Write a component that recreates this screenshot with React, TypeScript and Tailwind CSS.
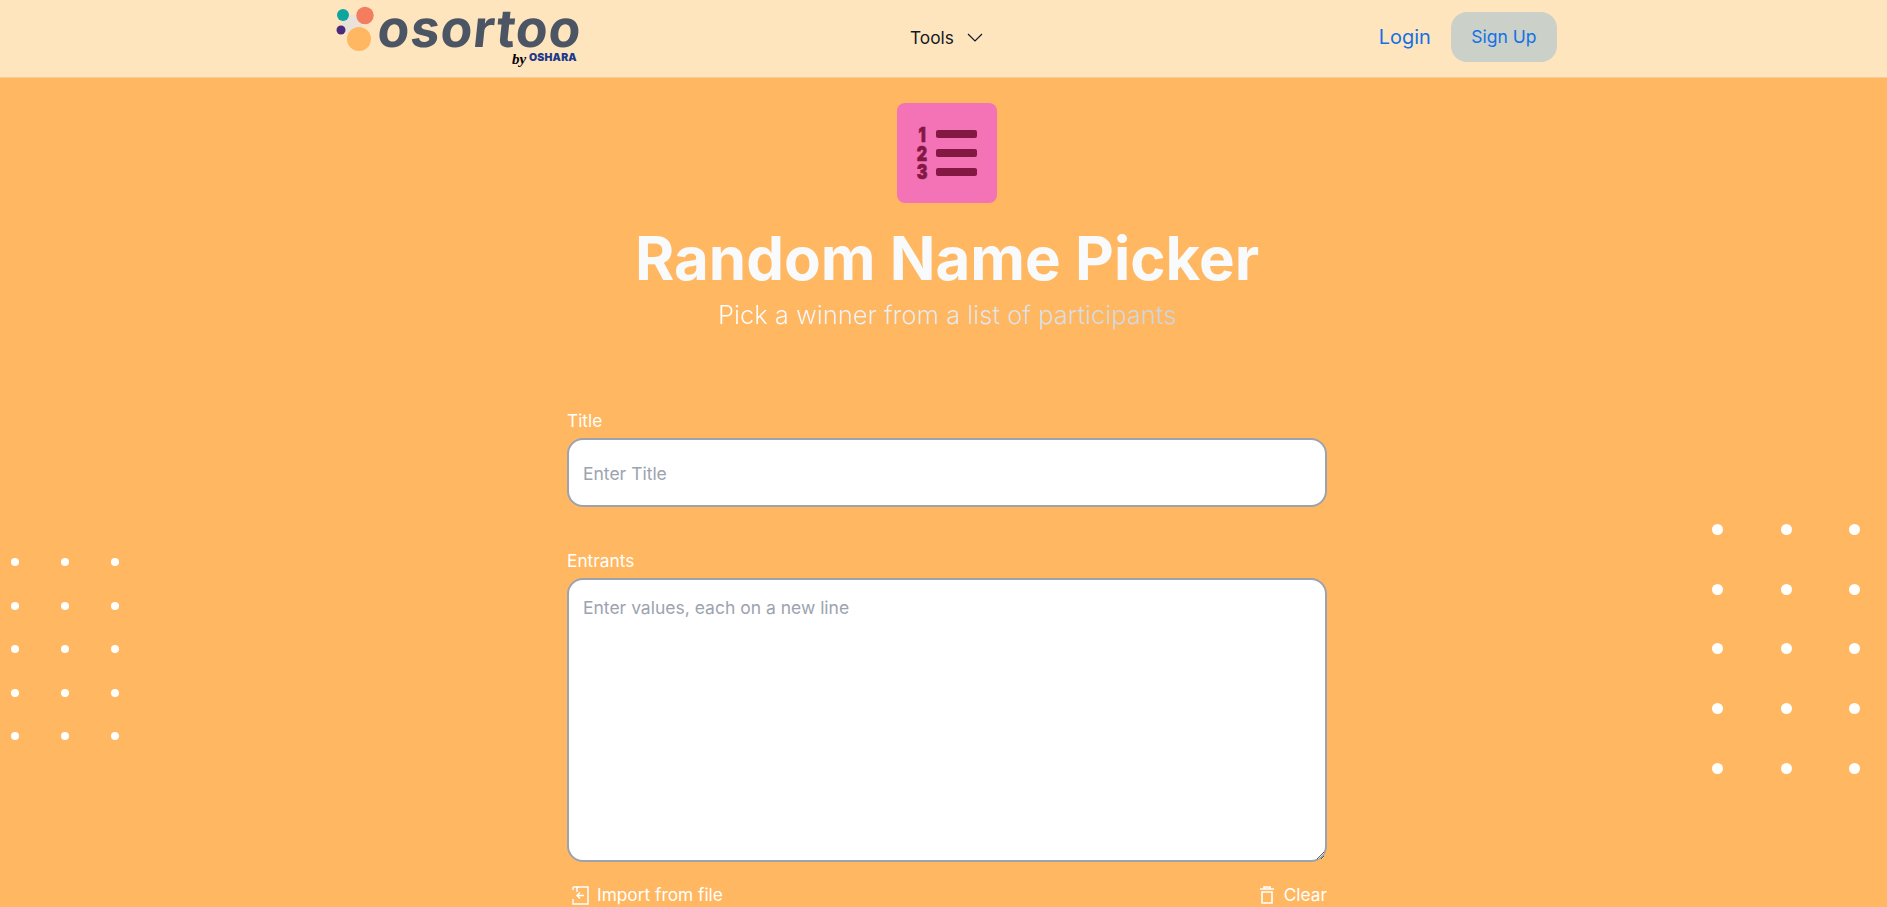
const FONT = "font-['Inter',sans-serif]"

function DotGrid({ className, dot }: { className: string; dot: string }) {
  const dots = Array.from({ length: 15 })
  return (
    <div className={className}>
      {dots.map((_, i) => (
        <span key={i} className={dot} />
      ))}
    </div>
  )
}

function Logo() {
  return (
    <div className="relative h-[77px] w-[245px] shrink-0 self-start">
      <svg className="absolute left-0 top-0" width="44" height="56" viewBox="0 0 44 56">
        <path d="M7 15 L29 15 L23 39 L5 30 Z" fill="#e8e2d8" />
        <circle cx="7" cy="15" r="6" fill="#0ea5a0" />
        <circle cx="29" cy="15.5" r="8.7" fill="#f47c5f" />
        <circle cx="5" cy="30" r="4.5" fill="#4c2a7c" />
        <circle cx="23" cy="39" r="12" fill="#ffb761" />
      </svg>
      <span className="absolute left-[42px] top-[8px] -skew-x-6 text-[52px] leading-[42px] font-bold tracking-[0.9px] text-[#4b5563]">
        osortoo
      </span>
      <span className="absolute left-[176px] top-[52px] font-['Liberation_Serif',serif] text-[15px] leading-[14px] font-bold italic text-black">
        by
      </span>
      <span className="absolute left-[193px] top-[52px] text-[10.5px] leading-[12px] font-black tracking-[0.2px] text-[#1e3a8a]">
        OSHARA
      </span>
    </div>
  )
}

function ListIcon() {
  return (
    <div className="flex h-[100px] w-[100px] items-center justify-center rounded-lg bg-[#f472b6]">
      <svg width="100" height="100" viewBox="0 0 100 100">
        <g transform="translate(25 0) scale(0.78 1)" fontFamily="Inter, sans-serif" fontWeight="900" fontSize="20.5" fill="#831843" stroke="#831843" strokeWidth="0.7" textAnchor="middle">
          <text y="39">1</text>
          <text y="58">2</text>
          <text y="76.5">3</text>
        </g>
        <rect x="39" y="27" width="41" height="8" rx="2" fill="#831843" />
        <rect x="39" y="46" width="41" height="8" rx="2" fill="#831843" />
        <rect x="39" y="65" width="41" height="8" rx="2" fill="#831843" />
      </svg>
    </div>
  )
}

export default function App() {
  return (
    <div className={`relative h-screen overflow-hidden bg-[#ffb761] ${FONT}`}>
      <header className="flex h-[78px] items-center border-b border-[#f5cb98] bg-[#ffe5bd] pb-[3px] pl-[336px]">
        <Logo />
        <button className="ml-[329px] flex items-center gap-[13px] pt-px text-[17.3px] text-[#111827]">
          Tools
          <svg width="16" height="9" viewBox="0 0 16 9" fill="none" stroke="#111827" strokeWidth="1.2">
            <path d="M1 1 L8 8 L15 1" />
          </svg>
        </button>
        <a className="ml-[396px] pt-px text-[19.9px] text-[#1271e6]">Login</a>
        <button className="ml-[20px] h-[50px] w-[106px] rounded-2xl bg-[#cbd0c9] pt-px text-[17.5px] text-[#1271e6]">
          Sign Up
        </button>
      </header>

      <DotGrid
        className="absolute left-[11px] top-[558px] grid grid-cols-3 gap-x-[42px] gap-y-[35.5px]"
        dot="h-2 w-2 rounded-full bg-white"
      />
      <DotGrid
        className="absolute left-[1712px] top-[524px] grid grid-cols-3 gap-x-[57.5px] gap-y-[48.7px]"
        dot="h-[11px] w-[11px] rounded-full bg-white"
      />

      <main className="flex flex-col items-center pl-[7px] pt-[25px]">
        <ListIcon />
        <h1 className="mt-[25px] text-6xl font-bold text-[#f8fafc]">Random Name Picker</h1>
        <p className="mt-[11px] bg-gradient-to-r from-white to-[#cbd5e1] bg-clip-text text-[25.5px] leading-8 font-light text-transparent">
          Pick a winner from a list of participants
        </p>

        <form className="mt-[78px] flex w-[760px] flex-col">
          <label className="text-[17.3px] leading-6 text-white">Title</label>
          <input
            placeholder="Enter Title"
            className="mt-[5px] h-[69px] rounded-2xl border-2 border-[#9ca3af] bg-white px-[14px] pt-px text-[17.5px] outline-none placeholder:text-[#9ca3af]"
          />
          <label className="mt-[42px] text-[17.3px] leading-6 text-white">Entrants</label>
          <textarea
            placeholder="Enter values, each on a new line"
            className="mt-[5px] h-[284px] rounded-2xl border-2 border-[#9ca3af] bg-white px-[14px] py-[15px] text-[17.5px] outline-none placeholder:text-[#9ca3af]"
          />
          <div className="mt-[21px] flex items-center justify-between text-[17.3px] leading-6 text-white">
            <button type="button" className="flex items-center gap-[8px] pl-[5px]">
              <svg width="17" height="19" viewBox="0 0 17 19" fill="none" stroke="white" strokeWidth="1.5">
                <path d="M5 6 V1 H16 V18 H1 V13 M1 1 H5 M1 1 V4 M12 9.5 H5 M8 6.5 L5 9.5 L8 12.5" />
              </svg>
              Import from file
            </button>
            <button type="button" className="flex items-center gap-[10px]">
              <svg width="14" height="18" viewBox="0 0 14 18" fill="none" stroke="white" strokeWidth="1.6">
                <path d="M0 3 H14 M4 3 V1 H10 V3 M2 6 H12 V17 H2 Z" />
              </svg>
              Clear
            </button>
          </div>
        </form>
      </main>
    </div>
  )
}
